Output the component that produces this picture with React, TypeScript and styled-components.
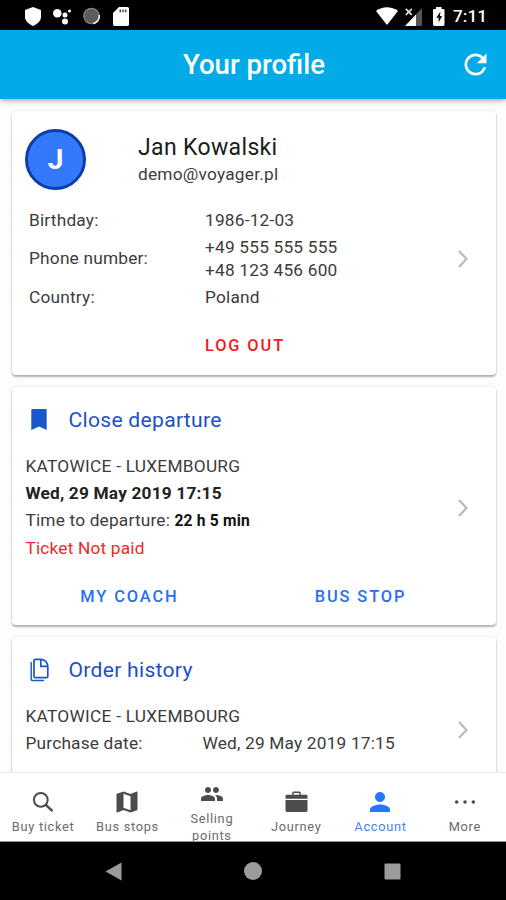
import React from "react";
import styled, { createGlobalStyle } from "styled-components";
import { MdMap, MdPeople, MdPerson, MdRefresh } from "react-icons/md";

const GlobalStyle = createGlobalStyle`
  * { box-sizing: border-box; }
  body { margin: 0; font-family: Roboto, "Liberation Sans", sans-serif; }
  svg { display: block; flex: none; }
`;

const Screen = styled.div`
  display: flex;
  flex-direction: column;
  width: 506px;
  height: 900px;
  overflow: hidden;
  background: #000;
`;

const StatusBar = styled.div`
  display: flex;
  justify-content: space-between;
  align-items: center;
  flex: none;
  height: 30px;
  padding: 1px 20px 0 24px;
  color: #fff;
`;

const Clock = styled.span`
  width: 33px;
  font-size: 17.3px;
  font-weight: 500;
  line-height: 30px;
`;

const StatusGroup = styled.div`
  display: flex;
  align-items: center;
`;

const Header = styled.header`
  display: grid;
  grid-template-columns: 48px 1fr 48px;
  align-items: center;
  flex: none;
  height: 69px;
  padding: 0 7px;
  background: #02abe8;
  color: #fff;
  z-index: 1;
  box-shadow: 0 1px 6px rgba(70, 40, 40, 0.5);
`;

const HeaderTitle = styled.h1`
  grid-column: 2;
  margin: 0 0 0 2px;
  font-size: 27.6px;
  font-weight: 500;
  text-align: center;
`;

const IconButton = styled.button`
  display: flex;
  justify-content: center;
  padding: 0;
  border: 0;
  background: none;
  color: inherit;
`;

const Content = styled.main`
  display: flex;
  flex-direction: column;
  gap: 12px;
  flex: 1;
  min-height: 0;
  overflow: hidden;
  padding: 12px 10px 0 12px;
  background: #fdfdfd;
`;

const Card = styled.section<{ $height: number }>`
  flex: none;
  height: ${(p) => p.$height}px;
  padding: 0 13px;
  border-radius: 4px;
  background: #fff;
  box-shadow: 0 2px 2px rgba(0, 0, 0, 0.28), 0 0 3px rgba(0, 0, 0, 0.12);
`;

const Person = styled.div`
  display: flex;
  height: 79px;
  padding-top: 18px;
`;

const Avatar = styled.div`
  display: flex;
  align-items: center;
  justify-content: center;
  width: 61px;
  height: 61px;
  margin-right: 52px;
  border: 3.5px solid #0c3cae;
  border-radius: 50%;
  background: #3379f9;
  color: #fff;
  font-size: 28px;
  font-weight: 700;
`;

const Name = styled.div`
  padding-top: 4px;
  font-size: 23px;
  letter-spacing: 0.35px;
  line-height: 30px;
  color: #1c1c1c;
`;

const Email = styled.div`
  font-size: 17.3px;
  letter-spacing: 0.22px;
  line-height: 23px;
  color: #3c3c3c;
`;

const Details = styled.div<{ $top: number }>`
  display: flex;
  align-items: center;
  justify-content: space-between;
  padding: ${(p) => p.$top}px 14px 0 0;
`;

const Fields = styled.dl`
  display: grid;
  grid-template-columns: 176px auto;
  row-gap: 3px;
  align-items: center;
  margin: 0 0 0 4px;
  font-size: 17.3px;
  letter-spacing: 0.2px;
  line-height: 23.5px;
  color: #3c3c3c;
`;

const Label = styled.dt`
  margin: 0;
`;

const Value = styled.dd`
  margin: 0;
`;

const Actions = styled.div<{ $top: number }>`
  display: grid;
  grid-auto-flow: column;
  grid-auto-columns: 1fr;
  justify-items: center;
  padding-top: ${(p) => p.$top}px;
  margin: 0 7px 0 -11px;
`;

const TextButton = styled.button<{ $color: string }>`
  padding: 0;
  border: 0;
  background: none;
  font: 500 16.4px / 24px Roboto, "Liberation Sans", sans-serif;
  letter-spacing: 1.9px;
  color: ${(p) => p.$color};
`;

const CardHeading = styled.h2`
  display: flex;
  align-items: center;
  height: 65px;
  margin: 0;
  font-size: 21.1px;
  font-weight: 400;
  letter-spacing: 0.28px;
  color: #1f4fc4;
`;

const HeadingIcon = styled.span`
  display: flex;
  justify-content: center;
  width: 28px;
  margin-right: 15.5px;
  color: #1957cc;
`;

const Lines = styled.div`
  padding-left: 0.5px;
  font-size: 17.3px;
  letter-spacing: 0.18px;
  line-height: 27px;
  color: #3c3c3c;
`;

const Route = styled.div`
  letter-spacing: 0.25px;
`;

const Departure = styled.div`
  font-weight: 700;
  color: #222;
`;

const Remaining = styled.b`
  font-size: 15.6px;
  color: #111;
`;

const Unpaid = styled.div`
  color: #f02a2a;
`;

const Purchase = styled.div`
  display: grid;
  grid-template-columns: 177px auto;
`;

const TabBar = styled.nav`
  display: grid;
  grid-template-columns: repeat(6, 1fr);
  flex: none;
  height: 70px;
  overflow: hidden;
  border-top: 1px solid #ececec;
  border-bottom: 1px solid #999;
  background: #fff;
`;

const Tab = styled.div<{ $active?: boolean; $wrapped?: boolean }>`
  display: flex;
  flex-direction: column;
  align-items: center;
  padding: ${(p) => (p.$wrapped ? 6 : 14)}px 12px 0;
  margin: 0 -7px 0 -5px;
  font-size: 12.8px;
  letter-spacing: 0.7px;
  line-height: 17px;
  text-align: center;
  color: ${(p) => (p.$active ? "#4285f8" : "#6b6b6b")};
`;

const TabIcon = styled.span<{ $active?: boolean }>`
  display: flex;
  align-items: center;
  justify-content: center;
  height: 30px;
  margin-bottom: 1px;
  color: ${(p) => (p.$active ? "#2277fa" : "#4c4c4c")};
`;

const TabLabel = styled.span<{ $wrapped?: boolean }>`
  width: ${(p) => (p.$wrapped ? "50px" : "auto")};
  white-space: ${(p) => (p.$wrapped ? "normal" : "nowrap")};
`;

const SystemNav = styled.div`
  display: flex;
  align-items: center;
  justify-content: space-between;
  flex: none;
  height: 58px;
  padding: 0 105px 0 105px;
`;

const Notifications = () => (
  <svg width="110" height="24" viewBox="24 3 110 24" fill="#fff">
    <path d="M33 6l8 3v7c0 4-3.5 7-8 9-4.500-2-8-5-8-9V9z" />
    <circle cx="57.300" cy="12.300" r="4.300" />
    <circle cx="65" cy="14" r="2.500" />
    <circle cx="69.500" cy="10" r="1.500" />
    <circle cx="65" cy="20.500" r="3" />
    <circle cx="91.500" cy="15" r="8" fill="#5c5c5c" />
    <circle cx="91.500" cy="15" r="7.600" fill="none" stroke="#777" strokeWidth="1.500" />
    <path d="M99.300 14a8 8 0 0 1-6 8.700" fill="none" stroke="#f4f4f4" strokeWidth="1.500" />
    <path d="M119 6h8.200c1 0 1.800.8 1.800 1.800v15.400c0 1-.8 1.800-1.800 1.800h-12.400c-1 0-1.800-.8-1.800-1.800V12z" />
    <path d="M120.300 8.500v2.800M123 8.500v2.800M125.700 8.500v2.800" stroke="#444" strokeWidth="1.500" />
  </svg>
);

const Connectivity = () => (
  <svg width="77" height="24" viewBox="376 3 77 24" fill="#fff">
    <path d="M376 10c6.500-5 15.500-5 22 0l-11 14z" />
    <path d="M422 7v18h-17z" fill="#555" />
    <path d="M416 13.500V25h-11z" />
    <path d="M405.800 7.800l6 6m0-6l-6 6" stroke="#ddd" strokeWidth="1.700" />
    <path d="M436 8V6h5.500v2h1.500c.8 0 1.500.6 1.500 1.400v14.200c0 .8-.7 1.400-1.500 1.400h-8.500c-.8 0-1.500-.6-1.500-1.400V9.400c0-.8.7-1.400 1.500-1.400z" />
    <path d="M440.500 10.500l-4.300 6.200h2.400v4.800l3.600-6.500h-2.300z" fill="#111" />
  </svg>
);

const Chevron = () => (
  <svg width="12" height="20" viewBox="0 0 12 20" fill="none" stroke="#bababa" strokeWidth="2.200">
    <path d="M2 2l7.500 8L2 18" />
  </svg>
);

const BookmarkIcon = () => (
  <svg width="16" height="21" viewBox="0 0 16 21" fill="currentColor">
    <path d="M1.400 0h13.200c.6 0 1.100.5 1.100 1.100V21L8 17.400.3 21V1.100C.3.500.8 0 1.400 0z" />
  </svg>
);

const SearchIcon = () => (
  <svg width="22" height="22" viewBox="0 0 22 22" fill="none" stroke="currentColor">
    <circle cx="8.800" cy="8.800" r="6.900" strokeWidth="2" />
    <path d="M13.800 13.800l6.700 6.400" strokeWidth="2.500" />
  </svg>
);

const BriefcaseIcon = () => (
  <svg width="23" height="22" viewBox="0 0 23 22" fill="currentColor">
    <path d="M1.900 3.700h5.300V2.200C7.200 1.200 8 .5 9 .5h5c1 0 1.800.7 1.800 1.700v1.500h5.300c.8 0 1.400.6 1.400 1.400v2.600H.5V5.100c0-.8.6-1.400 1.400-1.400zm6.700 0h5.800V2.600c0-.4-.3-.7-.7-.7H9.300c-.4 0-.7.3-.7.700z" />
    <path d="M.5 9h22v10.600c0 .8-.6 1.400-1.400 1.400H1.900c-.8 0-1.400-.6-1.400-1.400z" />
  </svg>
);

const MoreIcon = () => (
  <svg width="22" height="8" viewBox="0 0 22 8" fill="currentColor">
    <circle cx="2.700" cy="4" r="1.800" />
    <circle cx="11" cy="4" r="1.800" />
    <circle cx="19.300" cy="4" r="1.800" />
  </svg>
);

const CopyIcon = () => (
  <svg width="19" height="24" viewBox="0 0 19 24" fill="none" stroke="currentColor" strokeWidth="1.700">
    <path d="M1.200 4v17.500c0 .6.400 1 1 1H14" strokeWidth="1.400" />
    <path d="M5.500 1.300h5.300c3.800 0 7 3.200 7 7v10c0 .8-.6 1.400-1.400 1.400H5.400c-.8 0-1.400-.6-1.400-1.400V2.800c0-.8.700-1.500 1.500-1.500z" />
    <path d="M10.800 1.500v6.800h6.800" />
  </svg>
);

const tabs = [
  { label: "Buy ticket", icon: <SearchIcon /> },
  { label: "Bus stops", icon: <MdMap size={28} /> },
  { label: "Selling points", icon: <MdPeople size={24} />, wrapped: true },
  { label: "Journey", icon: <BriefcaseIcon /> },
  { label: "Account", icon: <MdPerson size={30} />, active: true },
  { label: "More", icon: <MoreIcon /> },
];

export default function App() {
  return (
    <Screen>
      <GlobalStyle />
      <StatusBar>
        <Notifications />
        <StatusGroup>
          <Connectivity />
          <Clock>7:11</Clock>
        </StatusGroup>
      </StatusBar>
      <Header>
        <HeaderTitle>Your profile</HeaderTitle>
        <IconButton aria-label="Refresh">
          <MdRefresh size={33} />
        </IconButton>
      </Header>
      <Content>
        <Card $height={264}>
          <Person>
            <Avatar>J</Avatar>
            <div>
              <Name>Jan Kowalski</Name>
              <Email>demo@voyager.pl</Email>
            </div>
          </Person>
          <Details $top={19}>
            <Fields>
              <Label>Birthday:</Label>
              <Value>1986-12-03</Value>
              <Label>Phone number:</Label>
              <Value>
                +49 555 555 555
                <br />
                +48 123 456 600
              </Value>
              <Label>Country:</Label>
              <Value>Poland</Value>
            </Fields>
            <Chevron />
          </Details>
          <Actions $top={25}>
            <TextButton $color="#f8171c">LOG OUT</TextButton>
          </Actions>
        </Card>
        <Card $height={238}>
          <CardHeading>
            <HeadingIcon>
              <BookmarkIcon />
            </HeadingIcon>
            Close departure
          </CardHeading>
          <Details $top={1}>
            <Lines>
              <Route>KATOWICE - LUXEMBOURG</Route>
              <Departure>Wed, 29 May 2019 17:15</Departure>
              <div>
                Time to departure: <Remaining>22 h 5 min</Remaining>
              </div>
              <Unpaid>Ticket Not paid</Unpaid>
            </Lines>
            <Chevron />
          </Details>
          <Actions $top={23}>
            <TextButton $color="#2870ee">MY COACH</TextButton>
            <TextButton $color="#2870ee">BUS STOP</TextButton>
          </Actions>
        </Card>
        <Card $height={238}>
          <CardHeading>
            <HeadingIcon>
              <CopyIcon />
            </HeadingIcon>
            Order history
          </CardHeading>
          <Details $top={1}>
            <Lines>
              <Route>KATOWICE - LUXEMBOURG</Route>
              <Purchase>
                <span>Purchase date:</span>
                <span>Wed, 29 May 2019 17:15</span>
              </Purchase>
            </Lines>
            <Chevron />
          </Details>
        </Card>
      </Content>
      <TabBar>
        {tabs.map((tab) => (
          <Tab key={tab.label} $active={tab.active} $wrapped={tab.wrapped}>
            <TabIcon $active={tab.active}>{tab.icon}</TabIcon>
            <TabLabel $wrapped={tab.wrapped}>{tab.label}</TabLabel>
          </Tab>
        ))}
      </TabBar>
      <SystemNav>
        <svg width="17" height="19" viewBox="0 0 17 19" fill="#9c9c9c">
          <path d="M.5 9.500L16.500.5v18z" />
        </svg>
        <svg width="18" height="18" viewBox="0 0 18 18" fill="#9c9c9c">
          <circle cx="9" cy="9" r="9" />
        </svg>
        <svg width="17" height="17" viewBox="0 0 17 17" fill="#9c9c9c">
          <rect x=".5" y=".5" width="16" height="16" rx="1" />
        </svg>
      </SystemNav>
    </Screen>
  );
}
